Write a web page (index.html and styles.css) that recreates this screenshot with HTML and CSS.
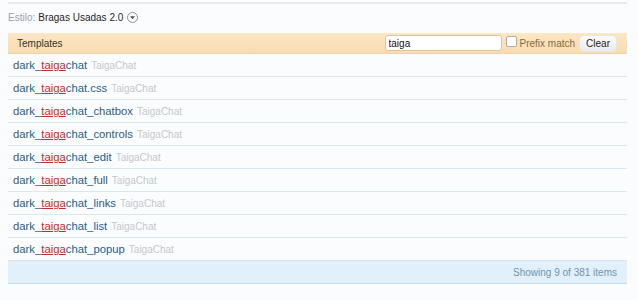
FILE: index.html
```html
<!DOCTYPE html>
<html>
<head>
<meta charset="utf-8">
<link rel="stylesheet" href="styles.css">
</head>
<body>
<div class="page">
  <div class="topline"></div>
  <div class="style-row">
    <span class="label">Estilo:</span>
    <span class="style-name">Bragas Usadas 2.0</span>
    <span class="chooser"><svg width="11" height="11" viewBox="0 0 11 11"><circle cx="5.5" cy="5.5" r="5" fill="#fff" stroke="#8a8f96" stroke-width="1"/><path d="M3 4.2 L8 4.2 L5.5 7.2 Z" fill="#4d5258"/></svg></span>
  </div>
  <div class="list">
    <div class="list-head">
      <span class="head-title">Templates</span>
      <div class="filter">
        <input class="search" type="text" value="taiga">
        <label class="prefix"><span class="box"></span>Prefix match</label>
        <span class="clear">Clear</span>
      </div>
    </div>
    <ol class="rows">
      <li class="row"><a class="tpl">dark_<em>taiga</em>chat</a><span class="addon">TaigaChat</span></li>
      <li class="row"><a class="tpl">dark_<em>taiga</em>chat.css</a><span class="addon">TaigaChat</span></li>
      <li class="row"><a class="tpl">dark_<em>taiga</em>chat_chatbox</a><span class="addon">TaigaChat</span></li>
      <li class="row"><a class="tpl">dark_<em>taiga</em>chat_controls</a><span class="addon">TaigaChat</span></li>
      <li class="row"><a class="tpl">dark_<em>taiga</em>chat_edit</a><span class="addon">TaigaChat</span></li>
      <li class="row"><a class="tpl">dark_<em>taiga</em>chat_full</a><span class="addon">TaigaChat</span></li>
      <li class="row"><a class="tpl">dark_<em>taiga</em>chat_links</a><span class="addon">TaigaChat</span></li>
      <li class="row"><a class="tpl">dark_<em>taiga</em>chat_list</a><span class="addon">TaigaChat</span></li>
      <li class="row"><a class="tpl">dark_<em>taiga</em>chat_popup</a><span class="addon">TaigaChat</span></li>
    </ol>
    <div class="list-foot">Showing 9 of 381 items</div>
  </div>
</div>
</body>
</html>
```
FILE: styles.css
```css
html, body {
  margin: 0;
  padding: 0;
  background: #fbfcfe;
}
body {
  font-family: "Liberation Sans", Arial, sans-serif;
  color: #222;
}
.page {
  padding: 2px 11px 0 8px;
}
.topline {
  height: 2px;
  background: #e3ecee;
}
.style-row {
  display: flex;
  align-items: center;
  height: 24px;
  margin-top: 1px;
  font-size: 10px;
  gap: 3px;
}
.label {
  color: #9aa0a6;
}
.style-name {
  color: #1f1f1f;
}
.chooser {
  display: flex;
  margin-left: 1px;
}
.list-head {
  display: flex;
  align-items: center;
  justify-content: space-between;
  height: 20px;
  margin-top: 4px;
  padding: 0 10px 0 9px;
  background: linear-gradient(#fde6c4, #f8dcb3);
  border-bottom: 1px solid #efd2a6;
}
.head-title {
  font-size: 10px;
  color: #3b3326;
}
.filter {
  display: flex;
  align-items: center;
}
.search {
  width: 109px;
  height: 14px;
  padding: 0 3px;
  margin: 0;
  border: 1px solid #d9c6a7;
  border-radius: 3px;
  font-family: "Liberation Sans", Arial, sans-serif;
  font-size: 10px;
  color: #111;
  background: #fff;
  outline: none;
}
.prefix {
  display: flex;
  align-items: center;
  margin-left: 4px;
  font-size: 10px;
  color: #8a6a36;
}
.box {
  width: 9px;
  height: 9px;
  border: 1px solid #a9a9a9;
  border-radius: 2px;
  background: #fff;
  margin-right: 3px;
  margin-top: -3px;
}
.clear {
  margin-left: 4px;
  padding: 2px 6px;
  font-size: 10px;
  color: #222;
  border-radius: 5px;
  background: linear-gradient(#fbfbfb, #e8ecef);
  border: 1px solid #ebe6dd;
}
.rows {
  list-style: none;
  margin: 0;
  padding: 0;
}
.row {
  display: flex;
  align-items: center;
  height: 22px;
  padding-left: 5px;
  border-bottom: 1px solid #dbe7ef;
}
.tpl {
  font-size: 11.3px;
  color: #2b5d83;
  text-decoration: none;
}
.tpl em {
  font-style: normal;
  color: #d0262a;
  text-decoration: underline;
}
.addon {
  margin-left: 4px;
  font-size: 10px;
  color: #c3c8cc;
}
.list-foot {
  height: 22px;
  display: flex;
  align-items: center;
  justify-content: flex-end;
  padding-right: 10px;
  background: #e2f0fb;
  border-bottom: 1px solid #c4dcec;
  font-size: 10px;
  color: #6d93b0;
}
```
